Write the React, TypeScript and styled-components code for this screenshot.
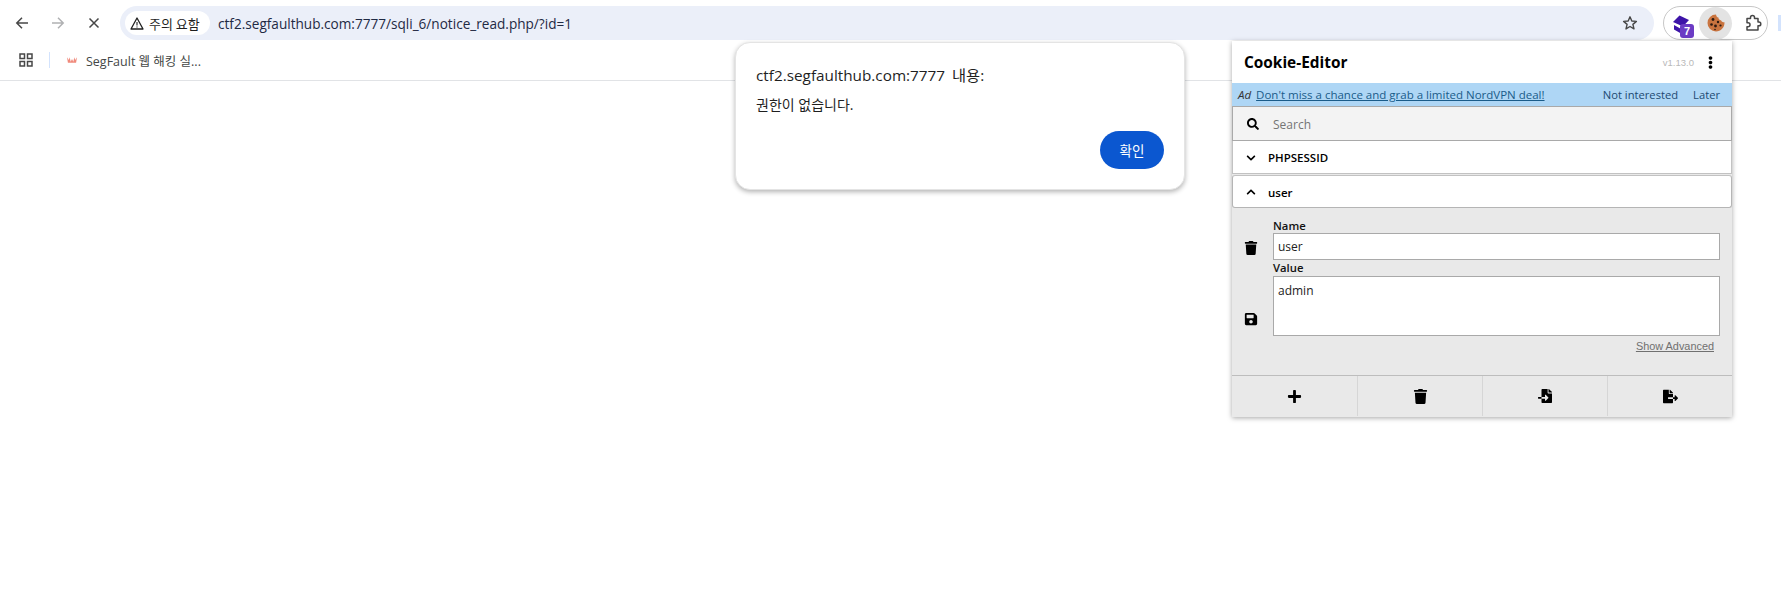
import React from 'react'
import styled, { createGlobalStyle } from 'styled-components'
import { FaChevronDown, FaChevronUp, FaPlus, FaSave, FaSearch, FaTrash, FaFileImport, FaFileExport, FaEllipsisV } from 'react-icons/fa'

const GlobalStyle = createGlobalStyle`
  html, body {
    margin: 0;
    height: 100%;
    background: #ffffff;
    overflow: hidden;
  }
  body {
    font-family: "Open Sans", "Noto Sans CJK KR", sans-serif;
  }
`

const Page = styled.div`
  width: 1781px;
  height: 594px;
  position: relative;
  background: #ffffff;
  overflow: hidden;
`

const Toolbar = styled.div`
  height: 46px;
  display: flex;
  align-items: center;
  padding: 0 0 0 4px;
  box-sizing: border-box;
`

const NavButton = styled.div<{ $dim?: boolean }>`
  width: 36px;
  height: 30px;
  flex: none;
  display: flex;
  align-items: center;
  justify-content: center;
  color: ${p => (p.$dim ? '#b0b1b3' : '#474747')};
`

const Omnibox = styled.div`
  margin-left: 8px;
  flex: none;
  width: 1534px;
  height: 34px;
  border-radius: 17px;
  background: #ebeff9;
  display: flex;
  align-items: center;
  padding: 0 16px 0 5px;
  box-sizing: border-box;
`

const Warning = styled.div`
  height: 24px;
  width: 85px;
  padding-left: 5px;
  box-sizing: border-box;
  flex: none;
  border-radius: 12px;
  background: #ffffff;
  display: flex;
  align-items: center;
  gap: 5px;
  font-family: "Noto Sans CJK KR", sans-serif;
  font-size: 13px;
  color: #1f1f1f;
  white-space: nowrap;
`

const Url = styled.div`
  margin-left: 8px;
  flex: 1;
  font-family: "Open Sans", sans-serif;
  font-size: 13.6px;
  color: #1f2a44;
`

const ExtensionPill = styled.div`
  margin-left: 9px;
  width: 105px;
  height: 34px;
  flex: none;
  border: 1px solid #c7c7c7;
  border-radius: 17px;
  box-sizing: border-box;
  display: flex;
  align-items: center;
  padding-left: 2px;
`

const PillSlot = styled.div<{ $active?: boolean }>`
  width: 33px;
  height: 33px;
  flex: none;
  border-radius: 50%;
  display: flex;
  align-items: center;
  justify-content: center;
  position: relative;
  background: ${p => (p.$active ? '#e3e3e3' : 'transparent')};
  &:last-child {
    margin-left: 4px;
  }
`

const CountBadge = styled.span`
  position: absolute;
  right: 5px;
  bottom: 2px;
  width: 14px;
  height: 14px;
  border-radius: 3px;
  background: #6b3bc4;
  color: #ffffff;
  font: 700 11px/14px "Liberation Sans", sans-serif;
  text-align: center;
`

const ToolbarEdge = styled.div`
  margin: 0 0 1px 10px;
  width: 3px;
  height: 16px;
  flex: none;
  background: #d3e3fd;
`

const BookmarkBar = styled.div`
  height: 35px;
  border-bottom: 1px solid #e1e3e6;
  box-sizing: border-box;
  display: flex;
  align-items: center;
  padding: 0 0 6px 19px;
`

const Divider = styled.div`
  width: 1px;
  height: 16px;
  margin: 0 17px 0 16px;
  background: #d3e3fd;
`

const BookmarkLabel = styled.span`
  margin-left: 9px;
  font-size: 12.5px;
  color: #444746;
  font-family: "Open Sans", "Noto Sans CJK KR", sans-serif;
`

const Dialog = styled.div`
  position: absolute;
  left: 735px;
  top: 42px;
  width: 450px;
  height: 148px;
  box-sizing: border-box;
  padding: 22px 20px 0 20px;
  background: #ffffff;
  border: 1px solid #e4e4e4;
  border-radius: 15px;
  box-shadow: 0 2px 5px rgba(0, 0, 0, 0.3);
  display: flex;
  flex-direction: column;
`

const DialogTitle = styled.div`
  font-size: 15.3px;
  line-height: 20px;
  word-spacing: 3px;
  color: #1f1f1f;
`

const DialogText = styled.div`
  margin-top: 10px;
  font-size: 14px;
  line-height: 20px;
  color: #1f1f1f;
`

const ConfirmButton = styled.div`
  align-self: flex-end;
  margin-top: 16px;
  width: 64px;
  height: 38px;
  border-radius: 19px;
  background: #0b57d0;
  color: #ffffff;
  font-size: 13.5px;
  display: flex;
  align-items: center;
  justify-content: center;
`

const Popup = styled.div`
  position: absolute;
  left: 1232px;
  top: 41px;
  width: 500px;
  height: 376px;
  background: #e9e9e9;
  box-shadow: 0 1px 5px rgba(0, 0, 0, 0.35);
  display: flex;
  flex-direction: column;
  font-family: "Open Sans", sans-serif;
`

const PopupHeader = styled.div`
  height: 42px;
  flex: none;
  box-sizing: border-box;
  background: #ffffff;
  display: flex;
  align-items: center;
  padding: 0 15px 0 12px;
`

const PopupTitle = styled.div`
  font-size: 15.4px;
  font-weight: 700;
  color: #000000;
  flex: 1;
`

const Version = styled.span`
  font-size: 9.5px;
  color: #b9b9b9;
  font-family: "Liberation Sans", sans-serif;
  margin-right: 10px;
`

const AdBar = styled.div`
  height: 23px;
  flex: none;
  background: #aed6f5;
  display: flex;
  align-items: center;
  padding: 0 12px 0 6px;
  font-size: 11.5px;
  color: #1d4a72;
`

const AdMark = styled.em`
  margin-right: 5px;
  color: #333333;
`

const AdLink = styled.span`
  flex: 1;
  text-decoration: underline;
  color: #1a5c8a;
`

const AdAction = styled.span`
  margin-left: 15px;
  font-size: 11.2px;
`

const SearchRow = styled.div`
  height: 35px;
  flex: none;
  box-sizing: border-box;
  background: #f3f3f3;
  border: 1px solid #a9a9a9;
  display: flex;
  align-items: center;
  padding: 1px 0 0 14px;
  color: #000000;
`

const SearchText = styled.span`
  margin-left: 14px;
  font-size: 12px;
  color: #757575;
`

const CookieRow = styled.div<{ $open?: boolean }>`
  height: 33px;
  margin-top: ${p => (p.$open ? '1px' : '0')};
  flex: none;
  box-sizing: border-box;
  background: #ffffff;
  border: 1px solid ${p => (p.$open ? '#b5b5b5' : '#c2c2c2')};
  border-top: ${p => (p.$open ? '1px solid #c2c2c2' : 'none')};
  border-radius: ${p => (p.$open ? '3px' : '0')};
  display: flex;
  align-items: center;
  padding: 1px 0 0 13px;
  font-size: 11.5px;
  font-weight: 600;
  color: #000000;
`

const CookieName = styled.span`
  margin-left: 12px;
`

const Details = styled.div`
  flex: 1;
  display: grid;
  grid-template-columns: 41px 1fr;
  padding: 11px 12px 0 0;
  align-content: start;
`

const FieldIcon = styled.div<{ $bottom: number }>`
  display: flex;
  align-items: flex-end;
  justify-content: center;
  padding: 0 3px ${p => p.$bottom}px 0;
`

const Field = styled.div`
  display: flex;
  flex-direction: column;
`

const FieldLabel = styled.label<{ $tall?: boolean }>`
  font-size: 11.3px;
  line-height: ${p => (p.$tall ? '16px' : '14px')};
  font-weight: 600;
  color: #111111;
`

const FieldBox = styled.div<{ $tall?: boolean }>`
  height: ${p => (p.$tall ? '60px' : '27px')};
  box-sizing: border-box;
  background: #ffffff;
  border: 1px solid #a9a9a9;
  padding: ${p => (p.$tall ? '5px 4px' : '4px 4px')};
  font-size: 12px;
  line-height: 18px;
  color: #222222;
`

const AdvancedLink = styled.div`
  grid-column: 2;
  text-align: right;
  margin: 4px 6px 0 0;
  font-family: "Liberation Sans", sans-serif;
  font-size: 10.9px;
  color: #707070;
  text-decoration: underline;
`

const ButtonBar = styled.div`
  height: 42px;
  flex: none;
  display: grid;
  grid-template-columns: repeat(4, 1fr);
  border-top: 1px solid #bdbdbd;
  box-sizing: border-box;
`

const BarButton = styled.div`
  display: flex;
  align-items: center;
  justify-content: center;
  color: #000000;
  border-left: 1px solid #d6d6d6;
  margin-bottom: 1px;
  &:first-child {
    border-left: none;
  }
`

const Back = () => (
  <svg width="14" height="14" viewBox="0 0 14 14" fill="none" stroke="currentColor" strokeWidth="1.5">
    <path d="M13 7H2M7 1.800 1.800 7 7 12.200" />
  </svg>
)

const Forward = () => (
  <svg width="14" height="14" viewBox="0 0 14 14" fill="none" stroke="currentColor" strokeWidth="1.5">
    <path d="M1 7h11M7 1.800 12.200 7 7 12.200" />
  </svg>
)

const Stop = () => (
  <svg width="12" height="12" viewBox="0 0 12 12" fill="none" stroke="currentColor" strokeWidth="1.5">
    <path d="M1.500 1.500 10.500 10.500M10.500 1.500 1.500 10.500" />
  </svg>
)

const WarningIcon = () => (
  <svg width="14" height="13" viewBox="0 0 14 13" fill="none">
    <path d="M7 1 13 12H1Z" stroke="#1f1f1f" strokeWidth="1.3" strokeLinejoin="round" />
    <path d="M7 5v3.400M7 9.400v1.200" stroke="#1f1f1f" strokeWidth="1.100" />
  </svg>
)

const Star = () => (
  <svg width="16" height="16" viewBox="0 0 16 16" fill="none" stroke="#474747" strokeWidth="1.4" strokeLinejoin="round">
    <path d="M8 1.800 9.800 6l4.600.4-3.500 3 1.100 4.500L8 11.500l-4 2.400 1.100-4.500-3.500-3L6.200 6Z" />
  </svg>
)

// purple stacked shape behind the count badge
const Cap = () => (
  <svg width="33" height="33" viewBox="0 0 33 33">
    <path d="M7 15 13.500 8.500 23 13l-6 6.500Z" fill="#3d14a8" />
    <path d="M8 18l8 4.500 2-2v6h-3l-7-4Z" fill="#3d14a8" />
  </svg>
)

const Cookie = () => (
  <svg width="18" height="18" viewBox="0 0 18 18">
    <path d="M9 .5c.2 1.600.9 2.700 2.400 3 .2 1.700 1.200 2.700 2.800 2.900.3 1.100 1.300 1.800 3.300 1.900C17.700 13.500 13.800 17.500 9 17.500A8.500 8.500 0 0 1 9 .5Z" fill="#c9743f" />
    <g fill="#2c1a12">
      <circle cx="6" cy="5.500" r="1.400" />
      <circle cx="11" cy="8" r="1.200" />
      <circle cx="4.500" cy="10.500" r="1.300" />
      <circle cx="8.500" cy="12" r="1.400" />
      <circle cx="13.500" cy="11.500" r="1.100" />
      <circle cx="8" cy="15.500" r="0.800" />
    </g>
  </svg>
)

const Puzzle = () => (
  <svg width="18" height="18" viewBox="0 0 18 18" fill="none" stroke="#474747" strokeWidth="1.500" strokeLinejoin="round">
    <path d="M3 4.500h3.500V3.600a2 2 0 0 1 4 0v.9H14v3.500h.9a1.900 1.900 0 0 1 0 3.800H14V16H3v-3.300h1a2 2 0 0 0 0-4H3Z" />
  </svg>
)

const Apps = () => (
  <svg width="14" height="14" viewBox="0 0 14 14" fill="none" stroke="#474747" strokeWidth="1.500">
    <rect x="1" y="1" width="4.500" height="4.500" />
    <rect x="8.500" y="1" width="4.500" height="4.500" />
    <rect x="1" y="8.500" width="4.500" height="4.500" />
    <rect x="8.500" y="8.500" width="4.500" height="4.500" />
  </svg>
)

const Favicon = () => (
  <svg width="10" height="8" viewBox="0 0 11 8" fill="#f08a7c">
    <path d="M0 1 2 4 3 1 4 6 5.500 3 7 6 8 1 9 4 11 1 10 7H1Z" />
  </svg>
)

const App = () => (
  <Page>
    <GlobalStyle />
    <Toolbar>
      <NavButton><Back /></NavButton>
      <NavButton $dim><Forward /></NavButton>
      <NavButton><Stop /></NavButton>
      <Omnibox>
        <Warning><WarningIcon />주의 요함</Warning>
        <Url>ctf2.segfaulthub.com:7777/sqli_6/notice_read.php/?id=1</Url>
        <Star />
      </Omnibox>
      <ExtensionPill>
        <PillSlot><Cap /><CountBadge>7</CountBadge></PillSlot>
        <PillSlot $active><Cookie /></PillSlot>
        <PillSlot><Puzzle /></PillSlot>
      </ExtensionPill>
      <ToolbarEdge />
    </Toolbar>
    <BookmarkBar>
      <Apps />
      <Divider />
      <Favicon />
      <BookmarkLabel>SegFault 웹 해킹 실...</BookmarkLabel>
    </BookmarkBar>

    <Dialog>
      <DialogTitle>ctf2.segfaulthub.com:7777 내용:</DialogTitle>
      <DialogText>권한이 없습니다.</DialogText>
      <ConfirmButton>확인</ConfirmButton>
    </Dialog>

    <Popup>
      <PopupHeader>
        <PopupTitle>Cookie-Editor</PopupTitle>
        <Version>v1.13.0</Version>
        <FaEllipsisV size={13} color="#000" />
      </PopupHeader>
      <AdBar>
        <AdMark>Ad</AdMark>
        <AdLink>Don't miss a chance and grab a limited NordVPN deal!</AdLink>
        <AdAction>Not interested</AdAction>
        <AdAction>Later</AdAction>
      </AdBar>
      <SearchRow>
        <FaSearch size={12} />
        <SearchText>Search</SearchText>
      </SearchRow>
      <CookieRow>
        <FaChevronDown size={10} />
        <CookieName>PHPSESSID</CookieName>
      </CookieRow>
      <CookieRow $open>
        <FaChevronUp size={10} />
        <CookieName>user</CookieName>
      </CookieRow>
      <Details>
        <FieldIcon $bottom={5}><FaTrash size={14} /></FieldIcon>
        <Field>
          <FieldLabel>Name</FieldLabel>
          <FieldBox>user</FieldBox>
        </Field>
        <FieldIcon $bottom={10}><FaSave size={14} /></FieldIcon>
        <Field>
          <FieldLabel $tall>Value</FieldLabel>
          <FieldBox $tall>admin</FieldBox>
        </Field>
        <AdvancedLink>Show Advanced</AdvancedLink>
      </Details>
      <ButtonBar>
        <BarButton><FaPlus size={15} /></BarButton>
        <BarButton><FaTrash size={15} /></BarButton>
        <BarButton><FaFileImport size={14} /></BarButton>
        <BarButton><FaFileExport size={15} /></BarButton>
      </ButtonBar>
    </Popup>
  </Page>
)

export default App
